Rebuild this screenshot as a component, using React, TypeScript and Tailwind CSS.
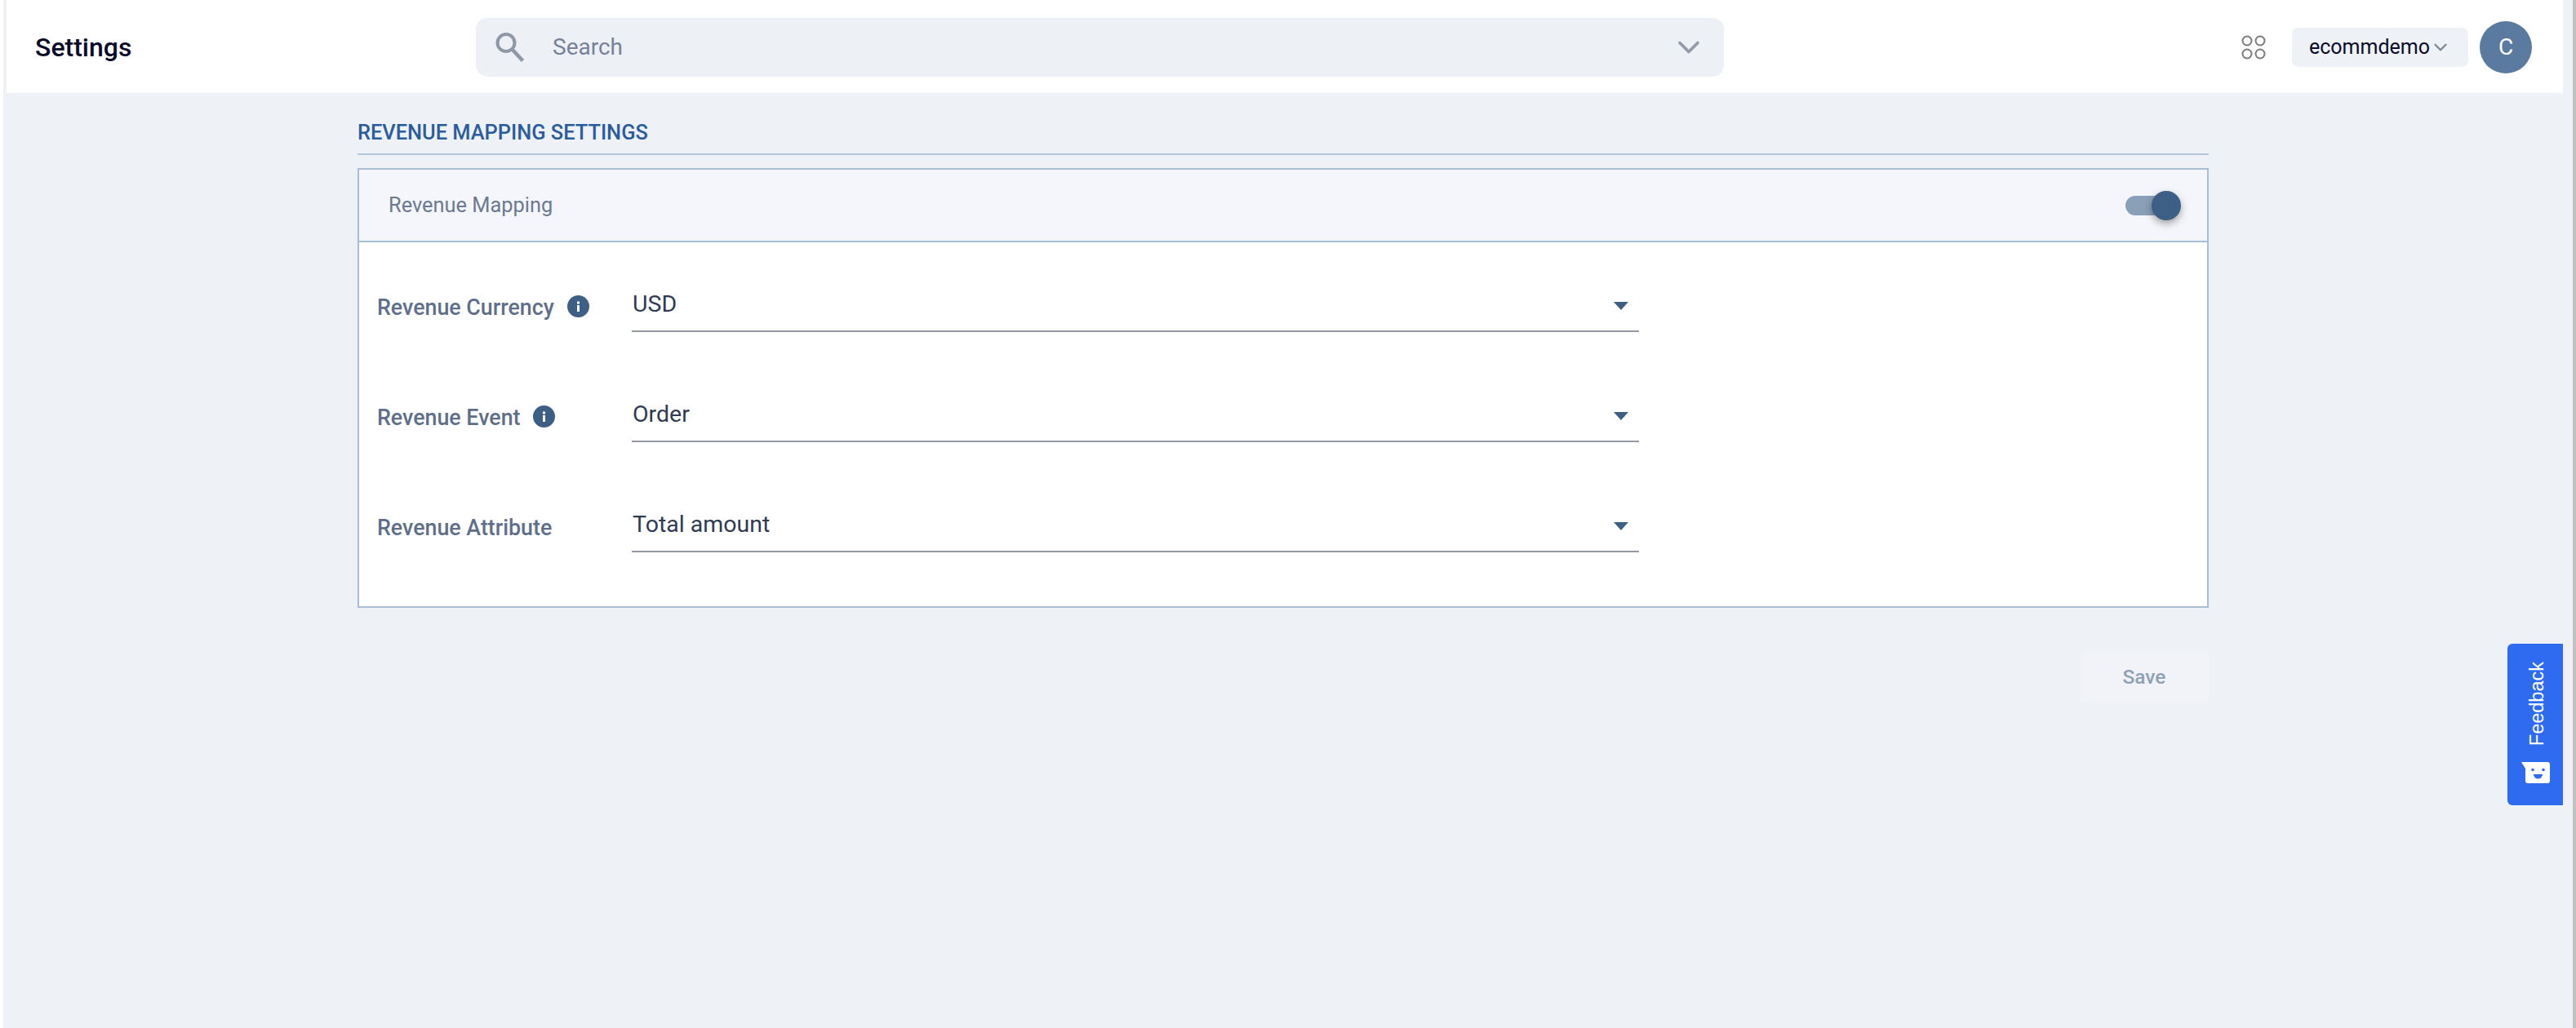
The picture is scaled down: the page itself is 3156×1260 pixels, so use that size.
import { ChevronDown } from "lucide-react";

const fields = [
  { label: "Revenue Currency", value: "USD", info: true },
  { label: "Revenue Event", value: "Order", info: true },
  { label: "Revenue Attribute", value: "Total amount", info: false },
];

function InfoIcon() {
  return (
    <svg viewBox="0 0 27 27" className="-mt-[4px] w-[27px] h-[27px] shrink-0">
      <circle cx="13.5" cy="13.5" r="13.5" fill="#3e5f85" />
      <rect x="12" y="12" width="3" height="8" fill="#fff" />
      <rect x="12" y="7.5" width="3" height="3" fill="#fff" />
    </svg>
  );
}

function FieldRow({ label, value, info }: { label: string; value: string; info: boolean }) {
  return (
    <div className="flex h-[135px] items-center pl-[22px]">
      <div className="flex w-[312px] shrink-0 items-center gap-4 pt-[11px]">
        <span className="text-[26.8px] font-medium text-[#5f6f8a]">{label}</span>
        {info && <InfoIcon />}
      </div>
      <div className="flex h-[70px] w-[1234px] items-center justify-between border-b-2 border-[#939aa6] pl-[1px] pr-[13px] pt-[6px]">
        <span className="text-[28.5px] text-[#2f3b52]">{value}</span>
        <span className="mt-[2px] h-0 w-0 border-x-[9px] border-t-[10px] border-x-transparent border-t-[#3e5f85]" />
      </div>
    </div>
  );
}

function SearchGlyph() {
  return (
    <svg viewBox="0 0 36 36" className="h-[36px] w-[36px]" fill="none" stroke="#8f98a8">
      <circle cx="13" cy="12.5" r="10.5" strokeWidth="4" />
      <path d="M21 21L33.5 34.5" strokeWidth="4.5" />
    </svg>
  );
}

function FeedbackFace() {
  return (
    <svg viewBox="0 0 35 26" className="w-[35px] h-[26px]">
      <path d="M0 0H32a3 3 0 0 1 3 3V23a3 3 0 0 1-3 3H8a3 3 0 0 1-3-3V8Z" fill="#fff" />
      <circle cx="14" cy="9.5" r="1.8" fill="#2f6bf0" />
      <circle cx="27" cy="9.5" r="1.8" fill="#2f6bf0" />
      <path d="M15 15H26a5.5 5.5 0 0 1-11 0Z" fill="#2f6bf0" />
    </svg>
  );
}

export default function App() {
  return (
    <div className="relative h-[1260px] w-[3156px] overflow-hidden bg-white font-['Roboto',sans-serif]">
      <div className="ml-[4px] h-full border-r-4 border-[#c2c2c2] bg-[#eef1f5]">
        <header className="ml-[4px] mr-[12px] flex h-[114px] items-center bg-white pt-[2px]">
          <h1 className="ml-[35px] w-[540px] text-[32px] font-medium text-[#0a0a2a]">Settings</h1>
          <div className="flex h-[72px] w-[1529px] items-center rounded-[14px] bg-[#edf0f4] pl-[24px] pr-[21px]">
            <SearchGlyph />
            <span className="ml-[34px] flex-1 text-[28px] text-[#76829a]">Search</span>
            <ChevronDown className="h-[44px] w-[44px] text-[#939aa8]" strokeWidth={2} />
          </div>
          <svg viewBox="0 0 30 30" className="ml-[634px] h-[30px] w-[30px]" fill="none" stroke="#7a7a7a" strokeWidth="2">
            <circle cx="7" cy="7" r="5.5" />
            <circle cx="23" cy="7" r="5.5" />
            <circle cx="7" cy="23" r="5.5" />
            <circle cx="23" cy="23" r="5.5" />
          </svg>
          <div className="ml-[32px] flex h-[48px] w-[216px] items-center rounded-[8px] bg-[#eef1f5] pl-[21px]">
            <span className="text-[25px] text-[#0a0a2a]">ecommdemo</span>
            <ChevronDown className="h-[26px] w-[26px] text-[#7d8796]" strokeWidth={2.2} />
          </div>
          <div className="ml-[14px] flex h-[64px] w-[64px] items-center justify-center rounded-full bg-[#5a7aa0] text-[28px] text-white">C</div>
        </header>

        <main className="ml-[434px] w-[2268px]">
          <h2 className="flex h-[76px] items-center border-b-2 border-[#b4c6de] pt-[22px] text-[25.4px] font-medium uppercase text-[#2a5c9e]">
            Revenue Mapping Settings
          </h2>
          <section className="mt-[16px] border-2 border-[#a8bdd8] bg-white">
            <div className="flex h-[89px] items-center justify-between border-b-2 border-[#a8bdd8] bg-[#f4f6fb] pl-[36px] pr-[32px]">
              <span className="text-[25.4px] text-[#6b7a92]">Revenue Mapping</span>
              <div className="relative h-[36px] w-[68px]">
                <div className="absolute left-0 top-[6px] h-[24px] w-[56px] rounded-full bg-[#8a9fb8]" />
                <div className="absolute right-0 top-0 h-[36px] w-[36px] rounded-full bg-[#3e5f85] shadow-[0_4px_10px_rgba(0,0,0,0.35)]" />
              </div>
            </div>
            <div className="pb-[34px] pt-[7px]">
              {fields.map((f) => (
                <FieldRow key={f.label} {...f} />
              ))}
            </div>
          </section>
          <div className="mt-[52px] flex justify-end">
            <button className="h-[66px] w-[158px] rounded-[8px] bg-[#f1f3f8] text-[24.5px] font-medium text-[#8fa2b5]">Save</button>
          </div>
        </main>
      </div>

      <div className="absolute left-[3072px] top-[789px] flex h-[198px] w-[68px] flex-col items-center rounded-l-[6px] bg-[#2f6bf0] pt-[22px]">
        <span className="ml-[3px] rotate-180 font-['Liberation_Sans',sans-serif] text-[23.5px] leading-[28px] text-white [writing-mode:vertical-rl]">Feedback</span>
        <div className="mt-[20px]">
          <FeedbackFace />
        </div>
      </div>
    </div>
  );
}
